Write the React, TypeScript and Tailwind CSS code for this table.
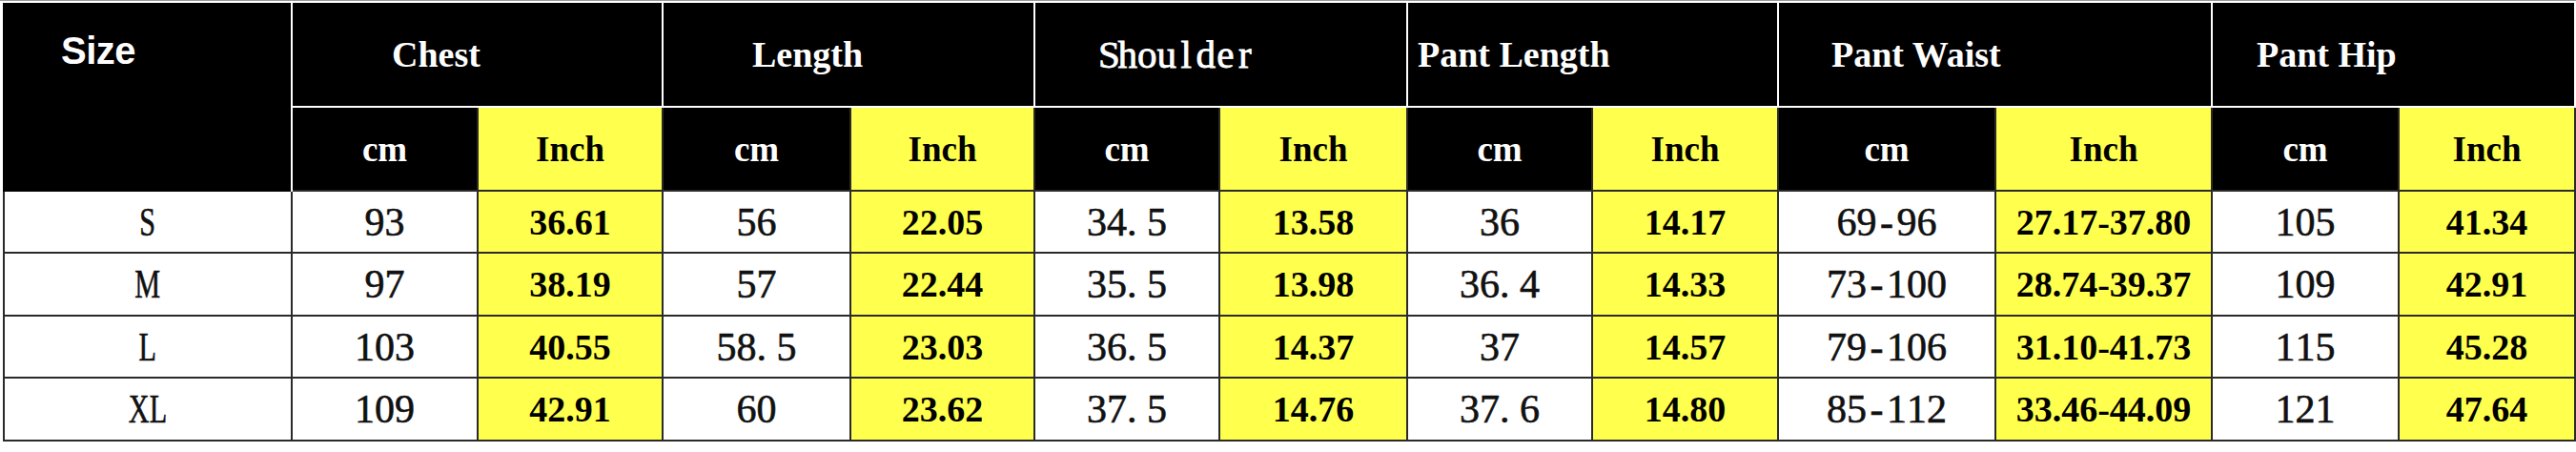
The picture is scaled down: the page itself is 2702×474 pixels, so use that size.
import React from 'react';

// ─── Data ─────────────────────────────────────────────────────────────────────

type Group = {
  label: string;
  pad: string;
  mono?: boolean;
};

const GROUPS: Group[] = [
  { label: 'Chest', pad: 'pl-[104px]' },
  { label: 'Length', pad: 'pl-[93px]' },
  { label: 'Shoulder', pad: 'pl-[66px]', mono: true },
  { label: 'Pant Length', pad: 'pl-[10px]' },
  { label: 'Pant Waist', pad: 'pl-[55px]' },
  { label: 'Pant Hip', pad: 'pl-[46px]' }
];

const ROWS = [
  {
    size: 'S',
    values: ['93', '36.61', '56', '22.05', '34.5', '13.58', '36', '14.17', '69-96', '27.17-37.80', '105', '41.34']
  },
  {
    size: 'M',
    values: ['97', '38.19', '57', '22.44', '35.5', '13.98', '36.4', '14.33', '73-100', '28.74-39.37', '109', '42.91']
  },
  {
    size: 'L',
    values: ['103', '40.55', '58.5', '23.03', '36.5', '14.37', '37', '14.57', '79-106', '31.10-41.73', '115', '45.28']
  },
  {
    size: 'XL',
    values: ['109', '42.91', '60', '23.62', '37.5', '14.76', '37.6', '14.80', '85-112', '33.46-44.09', '121', '47.64']
  }
];

// ─── Half-width serif text (each glyph in a 0.5em cell) ──────────────────────

function HalfWidth({ text, className }: { text: string; className: string }) {
  return (
    <span className={className}>
      {text.split('').map((ch, i) => (
        <span
          key={i}
          className={
            ch === '.' ? 'inline-block w-[0.5em] text-left' : 'inline-block w-[0.5em] text-center'
          }
        >
          {ch === ' ' ? '\u00a0' : ch}
        </span>
      ))}
    </span>
  );
}

// ─── Component ────────────────────────────────────────────────────────────────

export default function App() {
  return (
    <div className="h-[474px] w-[2702px] overflow-hidden bg-white">
      <div className="h-[1px] bg-[#9a9a9a]" />
      <div className="pl-[3px] pt-[2px]">
        <div className="grid grid-cols-[304px_195px_194px_197px_193px_194px_197px_194px_195px_228px_227px_196px_185px] grid-rows-[110px_88px_65px_66px_65px_66px]">
          {/* Size */}
          <div className="row-span-2 border-r-2 border-white bg-black pl-[61px] pt-[30px]">
            <span className="font-['Liberation_Sans',sans-serif] text-[40px] leading-none font-bold tracking-[-0.5px] text-white">
              Size
            </span>
          </div>

          {/* Group headers */}
          {GROUPS.map(g => (
            <div
              key={g.label}
              className={`col-span-2 flex items-center border-r-2 border-b-2 border-white bg-black ${g.pad}`}
            >
              {g.mono ? (
                <HalfWidth
                  text={g.label}
                  className="font-['Liberation_Serif',serif] text-[41px] leading-none text-white [-webkit-text-stroke:0.8px_#fff]"
                />
              ) : (
                <span className="font-['Liberation_Serif',serif] text-[38px] leading-none font-bold text-white">
                  {g.label}
                </span>
              )}
            </div>
          ))}

          {/* Unit headers */}
          {GROUPS.map(g => (
            <React.Fragment key={g.label}>
              <div className="flex items-center justify-center border-r-2 border-b-2 border-[#2a2a2a] bg-black">
                <span className="font-['Liberation_Serif',serif] text-[37px] leading-none font-bold text-white">
                  cm
                </span>
              </div>
              <div className="flex items-center justify-center border-r-2 border-b-2 border-[#2a2a2a] bg-[#ffff4d]">
                <span className="font-['Liberation_Serif',serif] text-[37px] leading-none font-bold text-black">
                  Inch
                </span>
              </div>
            </React.Fragment>
          ))}

          {/* Data rows */}
          {ROWS.map(row => (
            <React.Fragment key={row.size}>
              <div className="flex items-center justify-center border-r-2 border-b-2 border-l-2 border-[#2a2a2a] bg-white">
                <span className="inline-block scale-x-[0.72] font-['Liberation_Serif',serif] text-[42px] leading-none text-[#111] [-webkit-text-stroke:0.6px_#111]">
                  {row.size}
                </span>
              </div>
              {row.values.map((v, i) =>
                i % 2 === 0 ? (
                  <div
                    key={i}
                    className="flex items-center justify-center border-r-2 border-b-2 border-[#2a2a2a] bg-white"
                  >
                    <HalfWidth
                      text={v}
                      className="font-['Liberation_Serif',serif] text-[42px] leading-none text-[#111] [-webkit-text-stroke:0.6px_#111]"
                    />
                  </div>
                ) : (
                  <div
                    key={i}
                    className="flex items-center justify-center border-r-2 border-b-2 border-[#2a2a2a] bg-[#ffff4d]"
                  >
                    <span className="font-['Liberation_Serif',serif] text-[38px] leading-none font-bold text-black">
                      {v}
                    </span>
                  </div>
                )
              )}
            </React.Fragment>
          ))}
        </div>
      </div>
    </div>
  );
}
